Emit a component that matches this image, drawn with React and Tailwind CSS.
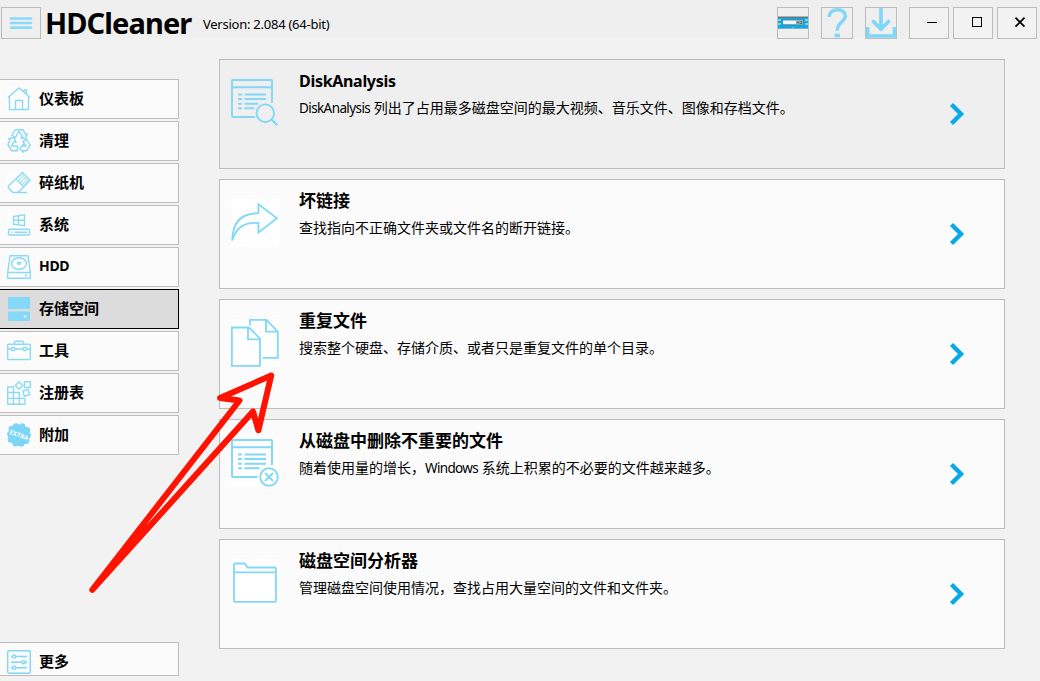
const sans = "font-['Noto_Sans','Noto_Sans_CJK_SC',sans-serif]";

function HomeIcon() {
    return (
        <svg width="24" height="24" viewBox="0 0 24 24" fill="none" stroke="#8ad9f5" strokeWidth="1.4">
            <path d="M0.8 10.5 L12 1 L23.2 10.5 M2.5 9.5 V22.5 H21.5 V9.5 M8.5 22.5 V13.5 H15.5 V22.5 M17 5 V3 H19.5 V7" />
        </svg>
    )
}

function RecycleIcon() {
    return (
        <svg width="24" height="24" viewBox="0 0 24 24" fill="none" stroke="#8ad9f5" strokeWidth="1.4" strokeLinejoin="round">
            <path d="M8 0.8 H16 L18.5 5.5 L20.3 4.8 L18.7 9.8 L13.8 8.8 L15.5 7.8 L12 2 L8.5 8.5 L4.8 6.2 Z" />
            <path d="M1.5 9.8 L7.2 8.5 L9 13.3 L7.2 12.5 L4.5 17 H10.5 V21.8 H4.8 L0.8 15.5 L3.3 11 Z" />
            <path d="M19.8 10.5 L23.2 16 L19.5 21.8 H16.2 V23.4 L12.8 19.5 L16.2 15.5 V17 H19 L15.8 12.5 Z" />
        </svg>
    )
}

function EraserIcon() {
    return (
        <svg width="24" height="24" viewBox="0 0 24 24" fill="none" stroke="#8ad9f5" strokeWidth="1.4" strokeLinejoin="round">
            <path d="M15.5 1.5 L22.5 8.5 Q23 9.5 22.5 10 L11 21.5 H6 L1.5 17 Q1 16 1.5 15 Z M9 8 L16.5 15.5 M9 21.5 H20" />
            <path strokeWidth="0.7" d="M10.8 6.3 L18.3 13.8 M12.6 4.5 L20 12 M14.2 3 L21.5 10.3 M11 10 L17.5 3.5 M13 12 L19.5 5.5 M15 14 L21.5 7.5" />
        </svg>
    )
}

function SystemIcon() {
    return (
        <svg width="24" height="24" viewBox="0 0 24 24" fill="none" stroke="#8ad9f5" strokeWidth="1.4">
            <path d="M6.5 3.5 L17.5 1.7 V12.8 L6.5 11.2 Z M11.5 2.8 V12 M6.5 7.3 H17.5" />
            <rect x="1.5" y="16.3" width="21" height="5.7" rx="1" />
            <path d="M4 19.2 H5.5 M7.5 19.2 H20" />
        </svg>
    )
}

function HddIcon() {
    return (
        <svg width="24" height="24" viewBox="0 0 24 24" fill="none" stroke="#8ad9f5" strokeWidth="1.4">
            <path d="M3 0.7 H21 L23.3 17.5 V23.3 H0.7 V17.5 Z M0.7 17.5 H23.3" />
            <ellipse cx="12" cy="8.5" rx="7.5" ry="5.8" />
            <ellipse cx="12" cy="8.3" rx="1.6" ry="1" />
            <path d="M18 20.5 H20" strokeWidth="1.8" />
        </svg>
    )
}

function StorageIcon() {
    return (
        <svg width="24" height="24" viewBox="0 0 24 24">
            <rect x="1" y="0" width="22" height="12" rx="0.8" fill="#84d8f8" />
            <rect x="1" y="14.5" width="22" height="9.5" rx="0.8" fill="#84d8f8" />
            <circle cx="18" cy="19.5" r="1.7" fill="#dcdcdc" />
        </svg>
    )
}

function ToolsIcon() {
    return (
        <svg width="24" height="24" viewBox="0 0 24 24" fill="none" stroke="#8ad9f5" strokeWidth="1.4">
            <rect x="0.7" y="5.2" width="22.6" height="15.3" rx="1" />
            <path d="M7.5 5.5 V3.5 Q7.5 2.3 9 2.3 H15 Q16.5 2.3 16.5 3.5 V5.5 M0.7 10 H4.2 M8.2 10 H15.8 M19.8 10 H23.3" />
            <circle cx="6.2" cy="10" r="1.7" />
            <circle cx="17.8" cy="10" r="1.7" />
        </svg>
    )
}

function RegistryIcon() {
    return (
        <svg width="24" height="24" viewBox="0 0 24 24" fill="none" stroke="#8ad9f5" strokeWidth="1.4">
            <path d="M0.7 6 H6.5 V23.3 H0.7 Z M0.7 11.5 H12.3 V23.3 M0.7 17.4 H18 V23.3 H0.7" />
            <path d="M12 0.9 L15.8 4.6 L12 8.3 L8.3 4.6 Z" />
            <rect x="17.5" y="0.7" width="5.8" height="5.8" />
            <path d="M15.8 10 L21.2 8.4 L22.6 13.7 L17.2 15.2 Z" />
        </svg>
    )
}

function ExtraIcon() {
    return (
        <svg width="24" height="24" viewBox="0 0 24 24">
            <g fill="#7dd5f7">
                <circle cx="12" cy="12" r="10.6" />
                <circle cx="9" cy="3.5" r="3.2" />
                <circle cx="15.2" cy="3.5" r="3.2" />
                <circle cx="20" cy="7.2" r="3.2" />
                <circle cx="20.8" cy="12.5" r="3.1" />
                <circle cx="19.2" cy="17.8" r="3.2" />
                <circle cx="14.2" cy="20.5" r="3.2" />
                <circle cx="8.6" cy="20.2" r="3.2" />
                <circle cx="3.9" cy="16.5" r="3.2" />
                <circle cx="3.2" cy="11" r="3.1" />
                <circle cx="4.7" cy="6" r="3.2" />
            </g>
            <text x="12" y="14.3" textAnchor="middle" transform="rotate(21 12 12)" fontSize="6.2" fontWeight="bold" fontFamily="Noto Sans, sans-serif" fill="white">EXTRA</text>
        </svg>
    )
}

function MoreIcon() {
    return (
        <svg width="24" height="24" viewBox="0 0 24 24" fill="none" stroke="#7fd8f8" strokeWidth="1.4">
            <rect x="0.7" y="0.7" width="22.6" height="22.6" rx="1.5" />
            <path d="M4 6.5 H5.5 M9 6.5 H20 M4 12.2 H15 M18.5 12.2 H20 M4 17.8 H5.5 M9 17.8 H20" />
            <circle cx="7.2" cy="6.5" r="1.6" />
            <circle cx="16.7" cy="12.2" r="1.6" />
            <circle cx="7.2" cy="17.8" r="1.6" />
        </svg>
    )
}

function AnalysisIcon() {
    return (
        <svg width="48" height="48" viewBox="0 0 48 48" fill="none" stroke="#82d8f8" strokeWidth="1.9">
            <path d="M41 24 V2 Q41 1 40 1 H2 Q1 1 1 2 V37 Q1 38 2 38 H24 M1 8.2 H41" />
            <path d="M7 15.5 H11 M13.5 15.5 H35 M7 20 H11 M13.5 20 H35 M7 24.7 H11 M13.5 24.7 H27 M7 29.3 H11 M13.5 29.3 H23" strokeWidth="2" />
            <circle cx="34.3" cy="34.2" r="8.8" />
            <path d="M40.5 40.5 L46.5 46.5" strokeWidth="2.2" />
        </svg>
    )
}

function LinkIcon() {
    return (
        <svg width="48" height="48" viewBox="0 0 48 48" fill="none" stroke="#82d8f8" strokeWidth="1.8">
            <path d="M1.2 41.5 C1.5 24 10 14 27.5 14.2 V5.2 L46 19.2 L27.5 33.5 V24 C14 23 5.5 27.5 1.2 41.5 Z" />
        </svg>
    )
}

function CopyIcon() {
    return (
        <svg width="48" height="48" viewBox="0 0 48 48" fill="none" stroke="#82d8f8" strokeWidth="1.8">
            <path d="M0.9 8.5 H18 L29 19.5 V46.8 H0.9 Z M17 8.5 V20.3 H29" />
            <path d="M19 6.5 V0.9 H35.5 L46.8 12.5 V38.8 H31.5 M35 0.9 V12.7 H46.8" />
        </svg>
    )
}

function RemoveIcon() {
    return (
        <svg width="48" height="48" viewBox="0 0 48 48" fill="none" stroke="#82d8f8" strokeWidth="1.9">
            <path d="M41 26 V2 Q41 1 40 1 H2 Q1 1 1 2 V37 Q1 38 2 38 H26.5 M1 8.2 H41" />
            <path d="M7 15.5 H11 M13.5 15.5 H35 M7 20 H11 M13.5 20 H35 M7 24.7 H11 M13.5 24.7 H35 M7 29.3 H11 M13.5 29.3 H28.5" strokeWidth="2" />
            <circle cx="38" cy="38" r="8.8" />
            <path d="M34 34 L42 42 M42 34 L34 42" />
        </svg>
    )
}

function FolderIcon() {
    return (
        <svg width="48" height="48" viewBox="0 0 48 48" fill="none" stroke="#82d8f8" strokeWidth="1.8">
            <path d="M3 5.5 Q3 4.5 4 4.5 H13 Q14 4.5 14.5 5.5 L16.5 8.5 H44 Q45 8.5 45 9.5 V41.5 Q45 42.8 43.8 42.8 H4.2 Q3 42.8 3 41.5 Z M3 13.4 H45" />
        </svg>
    )
}

const menu = [
    { label: "仪表板", Icon: HomeIcon },
    { label: "清理", Icon: RecycleIcon },
    { label: "碎纸机", Icon: EraserIcon },
    { label: "系统", Icon: SystemIcon },
    { label: "HDD", Icon: HddIcon, latin: true },
    { label: "存储空间", Icon: StorageIcon, active: true },
    { label: "工具", Icon: ToolsIcon },
    { label: "注册表", Icon: RegistryIcon },
    { label: "附加", Icon: ExtraIcon },
];

const cards = [
    {
        title: <span className="text-[16px] tracking-[-0.3px]">DiskAnalysis</span>,
        text: <><span className="text-[13.5px] tracking-[-0.6px]">DiskAnalysis</span> 列出了占用最多磁盘空间的最大视频、音乐文件、图像和存档文件。</>,
        Icon: AnalysisIcon,
        hover: true,
    },
    { title: "坏链接", text: "查找指向不正确文件夹或文件名的断开链接。", Icon: LinkIcon },
    { title: "重复文件", text: "搜索整个硬盘、存储介质、或者只是重复文件的单个目录。", Icon: CopyIcon },
    {
        title: "从磁盘中删除不重要的文件",
        text: <>随着使用量的增长，<span className="text-[13.5px] tracking-[-0.65px]">Windows</span> 系统上积累的不必要的文件越来越多。</>,
        Icon: RemoveIcon,
    },
    { title: "磁盘空间分析器", text: "管理磁盘空间使用情况，查找占用大量空间的文件和文件夹。", Icon: FolderIcon },
];

function MenuButton({ label, Icon, active, latin }) {
    return (
        <button className={`flex h-10 w-[179px] items-center gap-2 border border-l-0 pl-[7px] text-[15px] leading-5 font-bold text-black ${active ? "border-black bg-[#dcdcdc]" : "border-[#bdbdbd] bg-[#fbfbfb]"}`}>
            <span className={active ? "" : "bg-[#fdfdfd]"}><Icon /></span>
            <span className={`pb-0.5 ${latin ? "text-[14px] tracking-[-0.3px]" : ""}`}>{label}</span>
        </button>
    )
}

function Card({ title, text, Icon, hover }) {
    return (
        <div className={`flex h-[110px] w-[786px] border border-[#bdbdbd] pl-[11px] ${hover ? "bg-[#efefef]" : "bg-[#fbfbfb]"}`}>
            <div className={`mt-[19px] h-12 w-12 ${hover ? "" : "bg-white"}`}><Icon /></div>
            <div className="ml-5 flex-1 pt-[9px] whitespace-nowrap text-black">
                <h2 className="h-6 text-[17px] leading-6 font-bold">{title}</h2>
                <p className="mt-[5px] text-[14px] leading-5">{text}</p>
            </div>
            <div className="mr-[30px] flex w-8 items-center">
                <svg width="24" height="24" viewBox="0 0 24 24" fill="none" stroke="#08a9e9" strokeWidth="4.4">
                    <path d="M9.5 2.5 L19 12 L9.5 21.5" />
                </svg>
            </div>
        </div>
    )
}

export default function App() {
    return (
        <div className={`relative flex h-[681px] w-[1040px] flex-col overflow-hidden bg-[#f2f2f2] ${sans}`}>
            {/* Title bar */}
            <header className="flex h-[39px] items-end bg-[#efefef] pr-[3px] pl-px">
                <button className="flex h-8 w-10 items-center justify-center border border-[#bdbdbd]">
                    <svg width="24" height="24" viewBox="0 0 24 24" stroke="#8bdaf7" strokeWidth="2.7" strokeLinecap="round">
                        <path d="M2 7.5 H22 M2 12 H22 M2 16.7 H22" />
                    </svg>
                </button>
                <h1 className="ml-1 w-[158px] text-[29px] leading-8 font-bold tracking-[-0.9px] whitespace-nowrap text-black">HDCleaner</h1>
                <span className="mb-[5px] text-[13px] leading-5 tracking-[-0.25px] whitespace-nowrap text-black">Version: 2.084 (64-bit)</span>
                <div className="ml-auto flex gap-3">
                    <button className="flex h-8 w-8 items-center justify-center border border-[#bdbdbd]">
                        <svg width="30" height="30" viewBox="0 0 30 30">
                            <path d="M0 9 H30 V20 H0 Z" fill="#12a9df" />
                            <path d="M0 8.5 H30 V10 H0 Z" fill="#66777f" />
                            <path d="M0 12 H3 M0 16 H3 M27 12 H30 M27 16 H30" stroke="#eefaff" strokeWidth="1.2" />
                            <rect x="4.5" y="12" width="21" height="4.8" fill="#f4f4f4" stroke="#397f9c" strokeWidth="0.8" />
                            <rect x="18" y="12.5" width="7" height="4" rx="1" fill="#8aa4ad" />
                            <path d="M19.5 14.5 H21 M22.5 13.5 H24 M22.5 15.5 H24" stroke="#40626e" />
                            <path d="M0 20 H14 V19 H16 V20 H30 V21 H0 Z" fill="#74b5ce" />
                        </svg>
                    </button>
                    <button className="flex h-8 w-8 items-center justify-center border border-[#bdbdbd]">
                        <svg width="30" height="30" viewBox="0 0 30 30" fill="none" stroke="#80d8f9" strokeWidth="3.4">
                            <path d="M7.2 9 C7.5 -0.6 23.5 -0.6 23.3 8.2 C23.3 13.5 15.2 14 15.2 22.8" />
                            <path d="M12.6 27.5 H18" strokeWidth="3.6" />
                        </svg>
                    </button>
                    <button className="flex h-8 w-8 items-center justify-center border border-[#bdbdbd]">
                        <svg width="30" height="30" viewBox="0 0 30 30" fill="none" stroke="#80d8f9" strokeWidth="3.8">
                            <path d="M15 0 V20" />
                            <path d="M7.5 13.5 L15 21 L22.5 13.5" strokeLinecap="round" />
                            <path d="M1.7 19 V28 H28.3 V19" strokeWidth="3.4" />
                        </svg>
                    </button>
                    <div className="flex gap-1">
                        <button className="flex h-8 w-10 items-center justify-center border border-[#bdbdbd] bg-[#f2f2f2]">
                            <svg width="38" height="30" viewBox="0 0 38 30"><path d="M17 14.5 H27" stroke="black" /></svg>
                        </button>
                        <button className="flex h-8 w-10 items-center justify-center border border-[#bdbdbd] bg-[#f2f2f2]">
                            <svg width="38" height="30" viewBox="0 0 38 30"><rect x="18.5" y="9.5" width="9" height="9" fill="none" stroke="black" /></svg>
                        </button>
                        <button className="flex h-8 w-10 items-center justify-center border border-[#bdbdbd] bg-[#f2f2f2]">
                            <svg width="38" height="30" viewBox="0 0 38 30"><path d="M17.5 9.7 L26.5 18.7 M26.5 9.7 L17.5 18.7" stroke="black" strokeWidth="1.7" /></svg>
                        </button>
                    </div>
                </div>
            </header>

            <div className="flex flex-1">
                {/* Sidebar */}
                <nav className="flex w-[179px] flex-col gap-0.5 pt-10 pb-[5px]">
                    {menu.map((item) => <MenuButton key={item.label} {...item} />)}
                    <button className="mt-auto flex h-[34px] w-[179px] items-end gap-2 border border-l-0 border-[#bdbdbd] bg-[#fbfbfb] pb-px pl-[7px] text-[15px] leading-6 font-bold text-black">
                        <MoreIcon />
                        <span className="pb-px">更多</span>
                    </button>
                </nav>

                {/* Storage tools */}
                <main className="ml-10 flex flex-col gap-2.5 pt-5">
                    {cards.map((card, i) => <Card key={i} {...card} />)}
                </main>
            </div>

            {/* Hand drawn arrow */}
            <svg className="pointer-events-none absolute top-[360px] left-[70px]" width="220" height="240" viewBox="70 360 220 240" fill="none" stroke="#ff1200" strokeWidth="6" strokeLinejoin="round">
                <path d="M92.3 589.8 L239.5 400.5 L220 398 L271.2 375.5 L258.4 430.3 L253 411.5 Z" />
            </svg>
        </div>
    )
}
